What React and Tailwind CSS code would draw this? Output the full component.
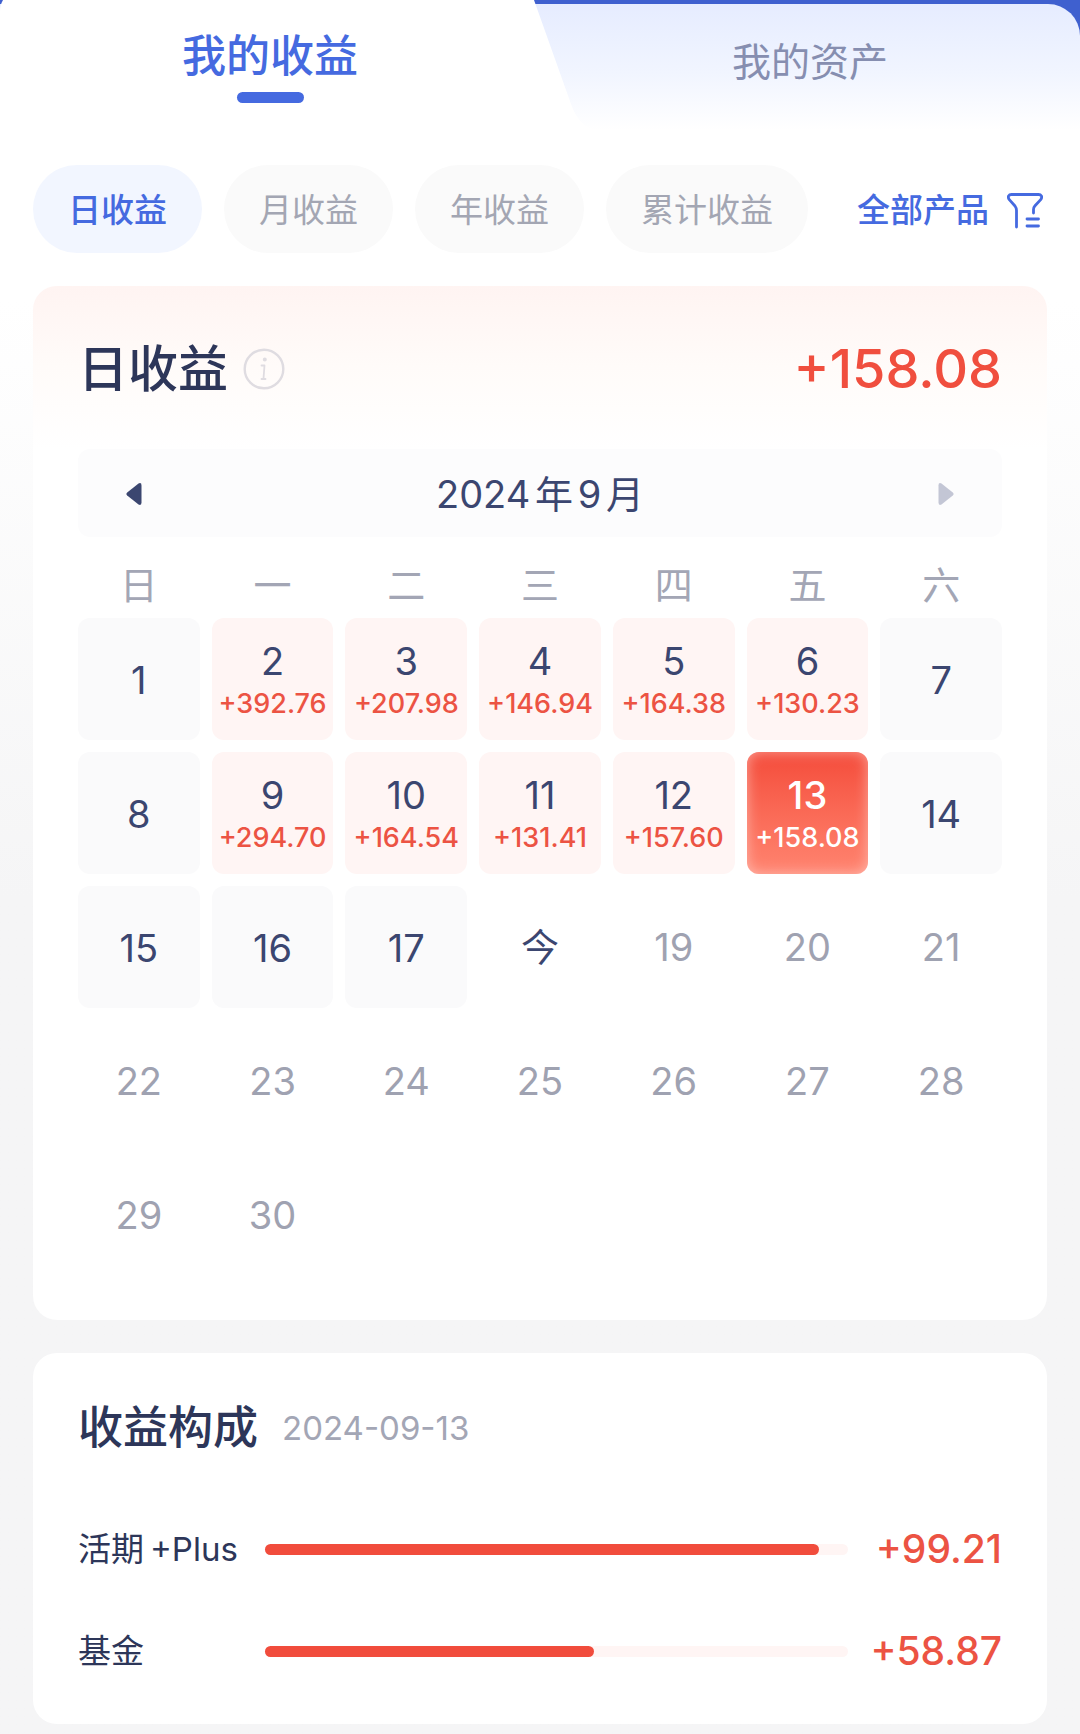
import React, { useState } from 'react';
import clsx from 'clsx';

const TABS = ['我的收益', '我的资产'];
const PERIODS = ['日收益', '月收益', '年收益', '累计收益'];
const WEEKDAYS = ['日', '一', '二', '三', '四', '五', '六'];
const TODAY = 18;
const DAYS_IN_MONTH = 30;

const EARNINGS = {
  2: '+392.76',
  3: '+207.98',
  4: '+146.94',
  5: '+164.38',
  6: '+130.23',
  9: '+294.70',
  10: '+164.54',
  11: '+131.41',
  12: '+157.60',
  13: '+158.08',
};

const COMPOSITION = [
  { name: '活期', suffix: '+Plus', amount: '+99.21', percent: 95 },
  { name: '基金', suffix: '', amount: '+58.87', percent: 56.5 },
];

function FilterIcon() {
  return (
    <svg viewBox="0 0 36 36" className="size-9" fill="none" stroke="currentColor" strokeWidth="2.8" strokeLinecap="round" strokeLinejoin="round" aria-hidden="true">
      <path d="M9.5 34V17.5Q9.5 15 8 13L2.3 6.6Q0.8 4.4 1.6 2.9Q2.4 1.5 4.5 1.5H31.5Q33.6 1.5 34.4 2.9Q35.2 4.4 33.7 6.6L28 12.8Q26.5 14.5 26.5 16.5V20" />
      <path d="M20 26H31.5M20 33H31.5" />
    </svg>
  );
}

function InfoIcon() {
  return (
    <svg viewBox="0 0 42 42" className="size-[42px]" fill="none" stroke="#dfdce1" strokeWidth="2.4" strokeLinecap="round" strokeLinejoin="round" aria-hidden="true">
      <circle cx="21" cy="21" r="19.3" />
      <path d="M18.5 17.5H21.5L20.5 30.5M18.5 31H22.5" strokeWidth="1.8" />
      <circle cx="21.8" cy="11.5" r="1.2" fill="#dfdce1" strokeWidth="1.6" />
    </svg>
  );
}

function Header({ tab, setTab }) {
  return (
    <header className="relative h-[130px] bg-[#3f60cf]">
      <div className="absolute inset-x-0 top-1 bottom-0 rounded-tr-[32px] bg-white bg-linear-to-b from-[#e6ecff] via-[#f1f5ff] via-55% to-white" />
      <svg viewBox="0 0 600 130" className="absolute top-0 left-0 h-[130px] w-[600px]" aria-hidden="true">
        <path d="M3 0H534L571 104Q580 130 600 130H0V12Q0 5 3 0Z" fill="#fff" />
      </svg>
      <div className="relative grid h-full grid-cols-2" role="tablist">
        {TABS.map((name, i) => (
          <button
            key={name}
            role="tab"
            aria-selected={tab === i}
            onClick={() => setTab(i)}
            className={clsx(
              'flex flex-col items-center',
              tab === i ? 'pt-[26px] text-[44px] leading-[60px] font-medium text-[#456ae0]' : 'pt-[34px] text-[39px] leading-[56px] text-[#868eb0]'
            )}
          >
            {name}
            {tab === i && <span className="mt-1.5 h-[11px] w-[67px] rounded-full bg-[#456ae0]" />}
          </button>
        ))}
      </div>
    </header>
  );
}

function DayCell({ day, selected, onSelect }) {
  const amount = EARNINGS[day];
  const isPast = day < TODAY;

  return (
    <button
      onClick={() => onSelect(day)}
      className={clsx(
        'flex h-[122px] flex-col items-center justify-center rounded-xl',
        isPast && 'pt-0.5',
        selected && 'bg-linear-to-b from-[#f44b3a] to-[#ff8470] font-medium text-white shadow-[inset_0_0_14px_rgba(255,220,215,0.6)]',
        !selected && amount && 'bg-[#fff5f4] text-[#3b4670]',
        !selected && !amount && isPast && 'bg-[#fafafb] text-[#3b4670]',
        day === TODAY && 'text-[#3b4670]',
        day > TODAY && 'text-[#9fa2b1]'
      )}
    >
      <span className="text-[38px] leading-[48px]">{day === TODAY ? '今' : day}</span>
      {amount && (
        <span className={clsx('text-[27px] leading-[38px] font-medium', selected ? 'text-white' : 'text-[#ec5343]')}>
          {amount}
        </span>
      )}
    </button>
  );
}

function CalendarCard() {
  const [selectedDay, setSelectedDay] = useState(13);
  const days = Array.from({ length: DAYS_IN_MONTH }, (_, i) => i + 1);

  return (
    <section className="rounded-3xl bg-white bg-linear-to-b from-[#fff4f2] via-[#fffbf9] via-[80px] to-white to-[164px] px-[45px] pb-11">
      <div className="flex h-[163px] items-center justify-between pt-0.5">
        <div className="flex items-center gap-[15px]">
          <h2 className="text-[50px] leading-[60px] font-medium text-[#2d3659]">日收益</h2>
          <button aria-label="收益说明">
            <InfoIcon />
          </button>
        </div>
        <span className="text-[54px] leading-[60px] font-medium text-[#f04e3e]">+158.08</span>
      </div>

      {/* Month switcher */}
      <div className="flex h-[88px] items-center justify-between rounded-xl bg-[#fcfcfd] px-12 pt-0.5">
        <button aria-label="上个月" className="text-[#3b4670]">
          <svg viewBox="0 0 16 24" className="h-6 w-4" fill="currentColor" aria-hidden="true">
            <path d="M12.5 1.5Q15.5 0 15.5 3.5V20.5Q15.5 24 12.5 22.5L1.2 13.6Q-0.4 12 1.2 10.4Z" />
          </svg>
        </button>
        <span className="text-[38px] leading-[48px] text-[#3b4670] [text-autospace:normal]">2024年9月</span>
        <button aria-label="下个月" className="text-[#c3c6d5]">
          <svg viewBox="0 0 16 24" className="h-6 w-4" fill="currentColor" aria-hidden="true">
            <path d="M3.5 1.5Q0.5 0 0.5 3.5V20.5Q0.5 24 3.5 22.5L14.8 13.6Q16.4 12 14.8 10.4Z" />
          </svg>
        </button>
      </div>

      <div className="mt-[23px] mb-2 grid grid-cols-7 gap-3 text-center text-[38px] leading-[50px] text-[#a3a6b5]">
        {WEEKDAYS.map((name) => (
          <span key={name}>{name}</span>
        ))}
      </div>
      <div className="grid grid-cols-7 gap-3">
        {days.map((day) => (
          <DayCell key={day} day={day} selected={day === selectedDay} onSelect={setSelectedDay} />
        ))}
      </div>
    </section>
  );
}

function CompositionCard() {
  return (
    <section className="rounded-3xl bg-white px-[45px] py-[43px]">
      <div className="flex items-center gap-6">
        <h2 className="text-[45px] leading-[64px] font-medium text-[#2d3659]">收益构成</h2>
        <span className="text-[33px] leading-[64px] text-[#a3a6b5]">2024-09-13</span>
      </div>
      <ul className="mt-[59px] flex flex-col gap-[42px]">
        {COMPOSITION.map((item) => (
          <li key={item.name} className="grid grid-cols-[187px_1fr_154px] items-center leading-[60px]">
            <div className="flex gap-1.5 text-[33px] text-[#2d3659]">
              <span>{item.name}</span>
              {item.suffix && <span>{item.suffix}</span>}
            </div>
            <div className="h-[11px] rounded-full bg-[#fff5f4]">
              <div className="h-full rounded-full bg-[#f14c3c]" style={{ width: `${item.percent}%` }} />
            </div>
            <span className="text-right text-[39px] font-medium text-[#ec5343]">{item.amount}</span>
          </li>
        ))}
      </ul>
    </section>
  );
}

export default function App() {
  const [tab, setTab] = useState(0);
  const [period, setPeriod] = useState(0);

  return (
    <div className="min-h-screen bg-[#f5f5f6] bg-linear-to-b from-white from-[300px] to-[#f5f5f6] to-[900px] pb-2 font-['Inter','Noto_Sans_CJK_SC',sans-serif]">
      <Header tab={tab} setTab={setTab} />
      <main className="flex flex-col gap-[33px] px-[33px] pt-[35px]">
        <div className="flex items-center justify-between">
          <div className="flex gap-[22px]">
            {PERIODS.map((name, i) => (
              <button
                key={name}
                onClick={() => setPeriod(i)}
                className={clsx(
                  'h-[88px] rounded-full px-[35px] pt-1 text-[33px] whitespace-nowrap',
                  period === i ? 'bg-[#f2f6ff] font-medium text-[#456ae0]' : 'bg-[#fafafa] text-[#a3a6b3]'
                )}
              >
                {name}
              </button>
            ))}
          </div>
          <button className="flex items-center gap-[18px] pt-1 pr-1 text-[33px] font-medium whitespace-nowrap text-[#456ae0]">
            全部产品
            <FilterIcon />
          </button>
        </div>
        <CalendarCard />
        <CompositionCard />
      </main>
    </div>
  );
}
